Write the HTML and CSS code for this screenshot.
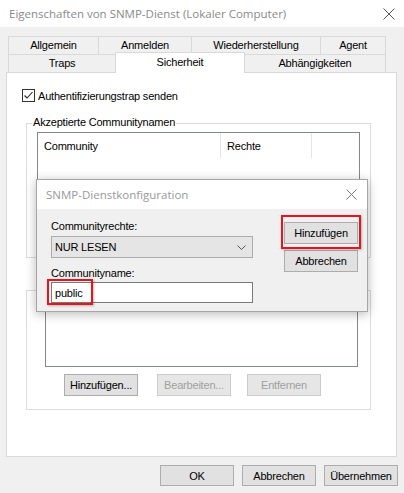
FILE: index.html
```html
<!DOCTYPE html>
<html lang="de">
<head>
<meta charset="utf-8">
<title>Eigenschaften von SNMP-Dienst</title>
<link rel="stylesheet" href="styles.css">
</head>
<body>
<div class="window">
  <div class="titlebar">
    <span class="title">Eigenschaften von SNMP-Dienst (Lokaler Computer)</span>
    <svg class="close" width="12" height="12" viewBox="0 0 12 12"><path d="M0.5 0.5L11.5 11.5M11.5 0.5L0.5 11.5" stroke="#555" stroke-width="1"/></svg>
  </div>
  <div class="tabs">
    <div class="tabrow">
      <div class="tab t-allg">Allgemein</div>
      <div class="tab t-anm">Anmelden</div>
      <div class="tab t-wied">Wiederherstellung</div>
      <div class="tab t-agent">Agent</div>
    </div>
    <div class="tabrow">
      <div class="tab t-traps">Traps</div>
      <div class="tab t-sich sel">Sicherheit</div>
      <div class="tab t-abh">Abhängigkeiten</div>
    </div>
  </div>
  <div class="panel">
    <div class="check">
      <span class="cbox"><svg width="11" height="11" viewBox="0 0 11 11"><path d="M1.5 5.5L4 8L9.5 2" fill="none" stroke="#222" stroke-width="1.1"/></svg></span>
      <span>Authentifizierungstrap senden</span>
    </div>
    <div class="group g1">
      <span class="legend">Akzeptierte Communitynamen</span>
      <div class="list l1">
        <div class="lhead">
          <div class="col c1">Community</div>
          <div class="col c2">Rechte</div>
          <div class="col c3"></div>
        </div>
      </div>
    </div>
    <div class="group g2">
      <div class="list l2"></div>
      <div class="btnrow">
        <button class="btn b-add">Hinzufügen...</button>
        <button class="btn dis b-edit">Bearbeiten...</button>
        <button class="btn dis b-del">Entfernen</button>
      </div>
    </div>
  </div>
  <div class="footer">
    <button class="btn">OK</button>
    <button class="btn">Abbrechen</button>
    <button class="btn">Übernehmen</button>
  </div>

  <div class="dialog">
    <div class="dtitle">
      <span class="dtext">SNMP-Dienstkonfiguration</span>
      <svg class="dclose" width="11" height="11" viewBox="0 0 11 11"><path d="M0.5 0.5L10.5 10.5M10.5 0.5L0.5 10.5" stroke="#777" stroke-width="1"/></svg>
    </div>
    <div class="dbody">
      <div class="dleft">
        <div class="dlabel first">Communityrechte:</div>
        <div class="combo">
          <span>NUR LESEN</span>
          <svg width="9" height="5" viewBox="0 0 9 5"><path d="M0.5 0.5L4.5 4.5L8.5 0.5" fill="none" stroke="#555" stroke-width="1"/></svg>
        </div>
        <div class="dlabel second">Communityname:</div>
        <div class="input">public</div>
      </div>
      <div class="dright">
        <button class="btn dbtn">Hinzufügen</button>
        <button class="btn dbtn">Abbrechen</button>
      </div>
      <div class="mark m1"></div>
      <div class="mark m2"></div>
    </div>
  </div>
</div>
</body>
</html>
```
FILE: styles.css
```css
* { box-sizing: border-box; }
html, body { margin: 0; padding: 0; }
body {
  width: 404px;
  height: 493px;
  overflow: hidden;
  background: #f0f0f0;
  font-family: "Liberation Sans", Arial, sans-serif;
  font-size: 11px;
  letter-spacing: -0.2px;
  color: #000;
}
.window {
  position: relative;
  width: 404px;
  height: 493px;
  display: flex;
  flex-direction: column;
}
.titlebar {
  height: 27px;
  flex: none;
  background: #fff;
  display: flex;
  align-items: center;
  justify-content: space-between;
  padding: 0 9px 0 9px;
}
.title {
  font-family: "Open Sans", "Noto Sans", sans-serif;
  font-size: 11.5px;
  letter-spacing: 0;
  color: #8a8a8a;
}
.tabs {
  margin: 9px 0 0 8px;
  display: flex;
  flex-direction: column;
  position: relative;
  z-index: 2;
}
.tabrow {
  display: flex;
  height: 18px;
  align-items: flex-start;
}
.tab {
  height: 18px;
  border: 1px solid #d9d9d9;
  border-bottom: none;
  background: #f0f0f0;
  margin-left: -1px;
  display: flex;
  align-items: center;
  justify-content: center;
  padding-bottom: 1px;
}
.tab:first-child { margin-left: 0; }
.t-allg { width: 91px; }
.t-anm { width: 94px; }
.t-wied { width: 130px; }
.t-agent { width: 66px; }
.t-traps { width: 108px; }
.t-sich { width: 130px; }
.t-abh { width: 142px; }
.tab.sel {
  background: #fff;
  height: 21px;
  margin-top: -2px;
  padding-bottom: 2px;
  position: relative;
  z-index: 3;
}
.panel {
  margin-left: 6px;
  width: 391px;
  height: 385px;
  flex: none;
  background: #fff;
  border: 1px solid #d9d9d9;
  display: flex;
  flex-direction: column;
}
.check {
  margin: 16px 0 0 15px;
  height: 13px;
  display: flex;
  align-items: center;
  gap: 3px;
}
.cbox {
  width: 13px;
  height: 13px;
  border: 1px solid #333;
  background: #fff;
  display: flex;
}
.group {
  position: relative;
  margin-left: 19px;
  width: 345px;
  border: 1px solid #dcdcdc;
  flex: none;
}
.g1 {
  margin-top: 21px;
  height: 135px;
  padding: 8px 0 0 10px;
}
.g2 {
  margin-top: 32px;
  height: 120px;
  padding: 11px 0 0 18px;
}
.legend {
  position: absolute;
  left: 5px;
  top: -8px;
  background: #fff;
  padding: 0 1px;
  line-height: 13px;
}
.list {
  border: 1px solid #828790;
  background: #fff;
}
.l1 { width: 323px; height: 90px; }
.l2 { width: 313px; height: 65px; }
.lhead {
  display: flex;
  height: 25px;
}
.col {
  display: flex;
  align-items: center;
  padding-left: 6px;
}
.c1 { width: 183px; border-right: 1px solid #e5e5e5; }
.c2 { width: 91px; border-right: 1px solid #e5e5e5; }
.c3 { flex: 1; }
.btnrow {
  display: flex;
  margin-top: 7px;
}
.btn {
  width: 74px;
  height: 21px;
  padding: 0;
  border: 1px solid #adadad;
  background: #e1e1e1;
  font: inherit;
  letter-spacing: -0.2px;
  color: #000;
}
.btnrow .btn { height: 22px; }
.btn.dis {
  border-color: #cccccc;
  background: #e6e6e6;
  color: #a0a0a0;
}
.b-add { margin-left: 19px; }
.b-edit { margin-left: 19px; }
.b-del { margin-left: 16px; }
.footer {
  margin-top: 8px;
  display: flex;
  justify-content: flex-end;
  gap: 8px;
  padding-right: 6px;
}

/* overlay dialog */
.dialog {
  position: absolute;
  left: 36px;
  top: 179px;
  width: 332px;
  height: 133px;
  border: 1px solid #a6a6a6;
  background: #f0f0f0;
  box-shadow: 0 2px 10px rgba(0, 0, 0, 0.28);
  display: flex;
  flex-direction: column;
  z-index: 5;
}
.dtitle {
  height: 29px;
  background: #fff;
  display: flex;
  align-items: center;
  justify-content: space-between;
  padding: 0 10px 0 9px;
  flex: none;
}
.dtext {
  font-family: "Open Sans", "Noto Sans", sans-serif;
  font-size: 11.5px;
  letter-spacing: 0;
  color: #999;
}
.dbody {
  position: relative;
  flex: 1;
  display: flex;
  padding-left: 14px;
}
.dleft {
  width: 202px;
  display: flex;
  flex-direction: column;
}
.dlabel { line-height: 13px; }
.dlabel.first { margin-top: 11px; }
.dlabel.second { margin-top: 9px; }
.combo {
  margin-top: 3px;
  height: 22px;
  background: #e5e5e5;
  border: 1px solid #acacac;
  display: flex;
  align-items: center;
  justify-content: space-between;
  padding: 0 6px 0 3px;
}
.input {
  margin-top: 2px;
  height: 21px;
  background: #fff;
  border: 1px solid #7a7a7a;
  display: flex;
  align-items: center;
  padding-left: 3px;
}
.dright {
  margin-left: 31px;
  display: flex;
  flex-direction: column;
  padding-top: 13px;
  gap: 6px;
}
.dbtn { height: 22px; }
.mark {
  position: absolute;
  border: 2px solid #e8141c;
  box-shadow: 1px 1px 2px rgba(0, 0, 0, 0.25);
}
.m1 { left: 10px; top: 70px; width: 46px; height: 26px; }
.m2 { left: 244px; top: 6px; width: 80px; height: 34px; }
```
